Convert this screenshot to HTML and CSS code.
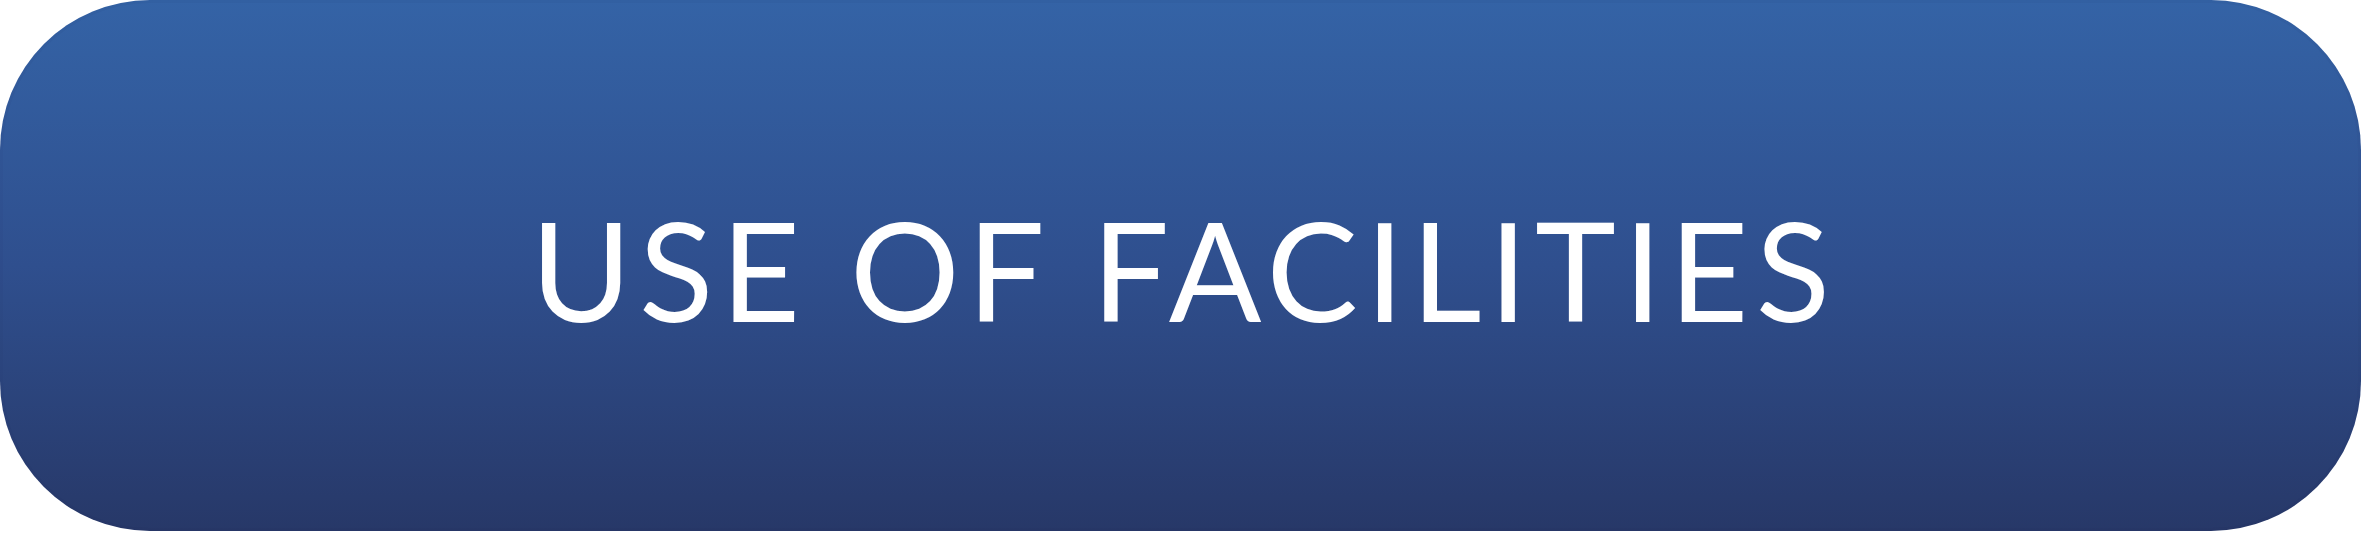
FILE: index.html
```html
<!DOCTYPE html>
<html lang="en">
<head>
<meta charset="utf-8">
<title>Use of Facilities</title>
<link rel="stylesheet" href="styles.css">
</head>
<body>
  <a class="cta" href="#">
    <span class="cta__label">USE OF FACILITIES</span>
  </a>
</body>
</html>
```

FILE: styles.css
```css
html, body {
  margin: 0;
  padding: 0;
  background: #ffffff;
}

body {
  width: 2363px;
  height: 533px;
  overflow: hidden;
}

.cta {
  box-sizing: border-box;
  display: flex;
  align-items: center;
  justify-content: center;
  width: 2361px;
  height: 531px;
  border-radius: 150px;
  background: linear-gradient(180deg, #3463a6 0%, #2f4f8e 50%, #273868 100%);
  box-shadow: inset 0 0 0 3px rgba(20, 30, 70, 0.04);
  text-decoration: none;
}

.cta__label {
  font-family: Lato, "Open Sans", "Noto Sans", sans-serif;
  font-weight: 400;
  font-size: 137px;
  line-height: 1;
  letter-spacing: 7.5px;
  margin-right: -7.5px;
  color: #ffffff;
  white-space: nowrap;
  padding-top: 8px;
}
```
